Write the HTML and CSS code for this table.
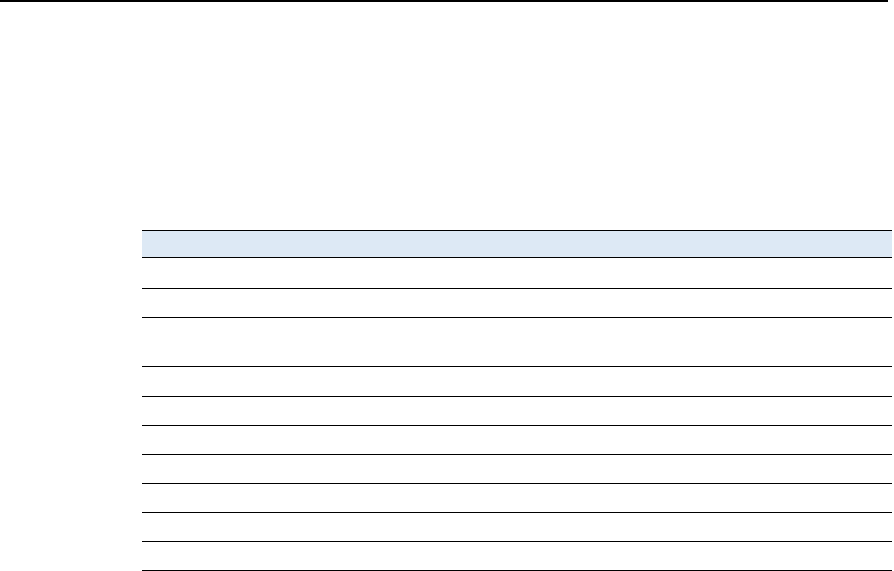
FILE: index.html
```html
<!DOCTYPE html>
<html>
<head>
<meta charset="utf-8">
<link rel="stylesheet" href="styles.css">
</head>
<body>
<div class="topbar"></div>
<div class="content">
  <div class="table">
    <div class="thead"></div>
    <div class="row r30"></div>
    <div class="row r28"></div>
    <div class="row r48"></div>
    <div class="row r29"></div>
    <div class="row r28"></div>
    <div class="row r28"></div>
    <div class="row r28"></div>
    <div class="row r28"></div>
    <div class="row r28"></div>
    <div class="row r28"></div>
  </div>
</div>
</body>
</html>
```
FILE: styles.css
```css
html, body {
  margin: 0;
  padding: 0;
  background: #fff;
  font-family: "Liberation Sans", Arial, sans-serif;
}
.topbar {
  width: 888px;
  height: 2px;
  background: #000;
}
.content {
  padding-top: 228px;
  padding-left: 142px;
}
.table {
  width: 750px;
  display: flex;
  flex-direction: column;
}
.thead {
  height: 26px;
  background: #dde9f5;
  border-top: 1px solid #000;
  border-bottom: 1px solid #000;
}
.row {
  border-bottom: 1px solid #000;
}
.r30 { height: 30px; }
.r29 { height: 29px; }
.r28 { height: 28px; }
.r48 { height: 48px; }
```
